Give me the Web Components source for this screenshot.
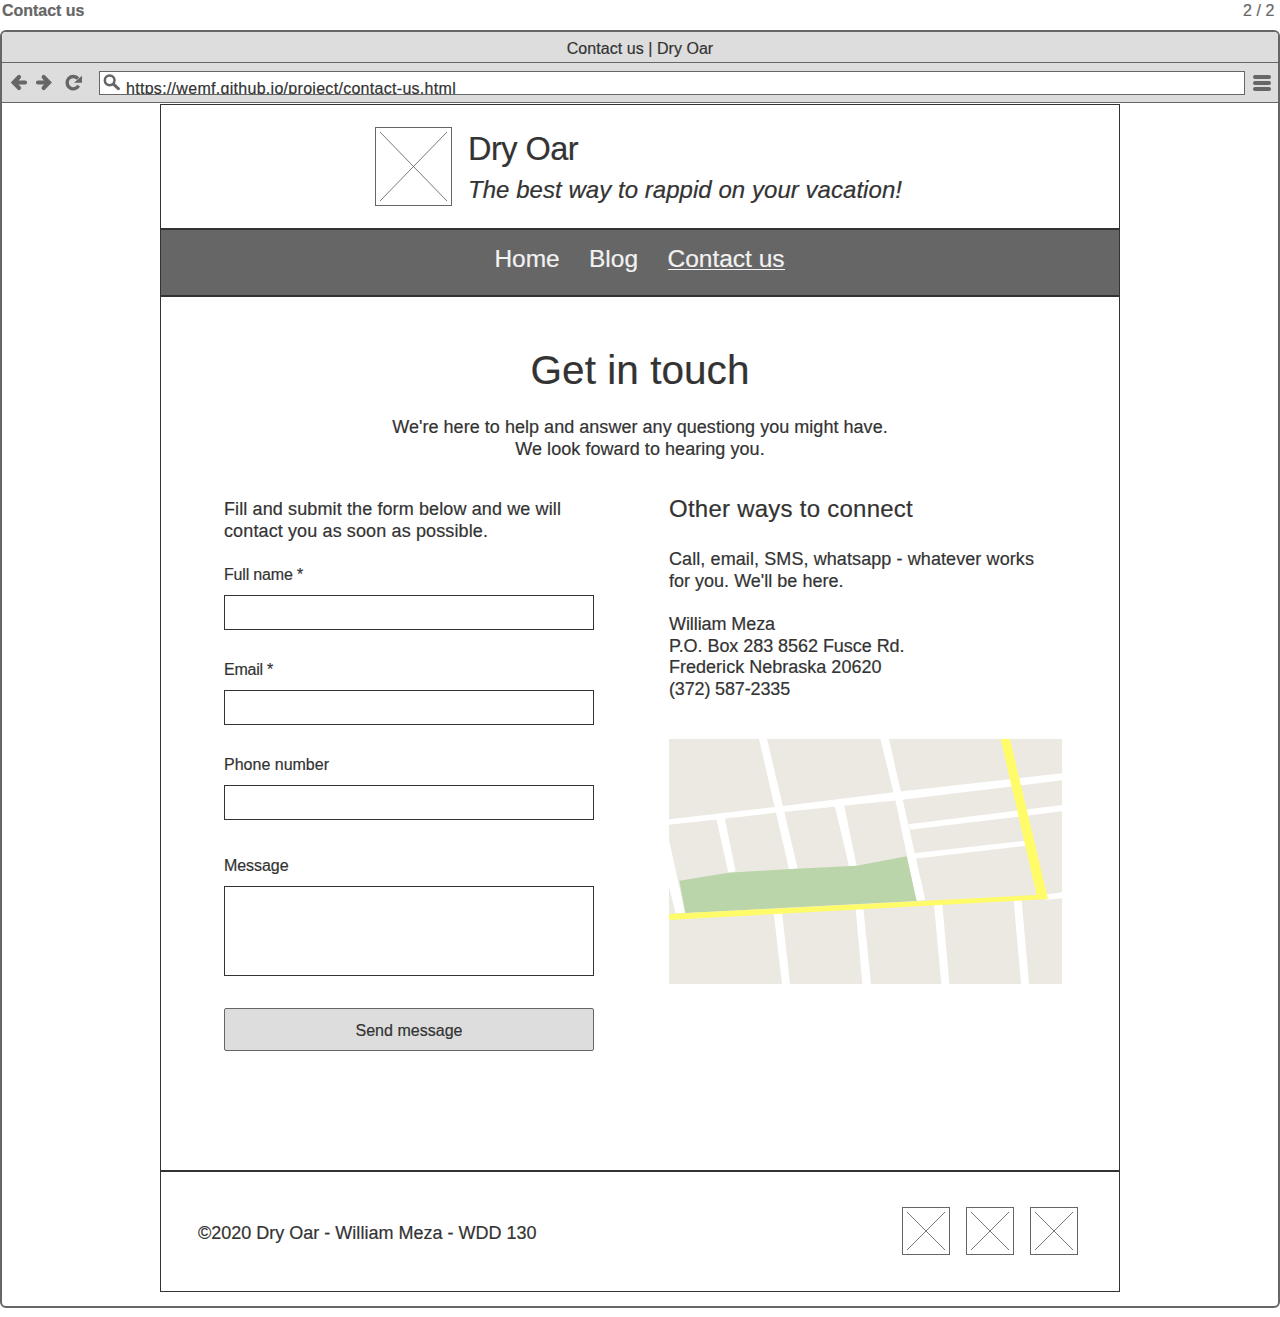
<!DOCTYPE html>
<html lang="en">
<head>
<meta charset="utf-8">
<title>Contact us | Dry Oar</title>
<style>
html,body{margin:0;background:#fff}
body{font-family:"Liberation Sans",Arial,sans-serif;color:#333}
</style>
</head>
<body>
<wire-app></wire-app>
<script>
const define = (name, html, setup) => customElements.define(name, class extends HTMLElement {
  connectedCallback() {
    if (this.shadowRoot) return;
    const t = document.createElement('template');
    t.innerHTML = html;
    this.attachShadow({mode: 'open'}).appendChild(t.content.cloneNode(true));
    if (setup) setup(this, this.shadowRoot);
  }
});

/* One line of text, tracked so that it spans the width given in "w". */
define('text-line', `
<style>:host{display:block;white-space:nowrap;-webkit-text-stroke:.2px currentColor}span{display:inline-block;vertical-align:top}</style>
<span><slot></slot></span>`, (el, root) => {
  const span = root.querySelector('span');
  const want = parseFloat(el.getAttribute('w'));
  if (!want) return;
  const n = el.textContent.length;
  const have = span.getBoundingClientRect().width;
  span.style.letterSpacing = ((want - have) / n).toFixed(4) + 'px';
});

define('image-box', `
<style>
:host{display:block;box-sizing:border-box;border:1px solid #666;padding:4px;background:#fff;flex:none}
svg{display:block;width:100%;height:100%}
</style>
<svg viewBox="0 0 100 100" preserveAspectRatio="none"><path d="M0 0L100 100M100 0L0 100" stroke="#555" stroke-width=".8" vector-effect="non-scaling-stroke" fill="none"/></svg>`);

define('form-field', `
<style>
:host{display:flex;flex-direction:column;gap:10px;padding-top:1px;font-size:16px;line-height:20px}
div{box-sizing:border-box;height:var(--box,35px);border:1px solid #333;background:#fff}
</style>
<slot></slot><div></div>`);

define('send-button', `
<style>
:host{display:flex;box-sizing:border-box;height:43px;padding-top:2px;align-items:center;justify-content:center;border:1px solid #666;border-radius:2px;background:#ddd;font-size:16px;line-height:20px}
</style>
<slot></slot>`);

define('street-map', `
<style>:host{display:block;width:393px;height:245px}svg{display:block}</style>
<svg width="393" height="245" viewBox="27 27 1179 735">
<rect x="27" y="27" width="1179" height="735" fill="#ece9e2"/>
<g fill="#fff">
<path d="M27 268L345 231L700 187L1206 130V151L720 210L370 246L27 284Z"/>
<path d="M297 27H321L413 416L387 418Z"/>
<path d="M661 27H687L796 510L769 512L706 210Z"/>
<path d="M168 262L193 259L227 424L205 428Z"/>
<path d="M523 222L551 219L590 407L567 409Z"/>
<path d="M745 283L1206 225V244L750 299Z"/>
<path d="M760 370L1096 332L1100 347L764 386Z"/>
<path d="M27 330L75 548L47 550L27 470Z"/>
<path d="M1155 494L1206 487V505L1155 509Z"/>
<path d="M341 548L366 546L390 762H366Z"/>
<path d="M587 536L610 535L633 762H607Z"/>
<path d="M822 524L847 522L868 762H844Z"/>
<path d="M1061 512L1085 511L1107 762H1083Z"/>
</g>
<path d="M58 452L205 428L405 416L590 407L740 379L770 513L76 549Z" fill="#bbd5ab"/>
<path d="M1022 27H1050L1164 507L27 570V552L1130 495Z" fill="#fffb69"/>
</svg>`);

define('browser-bar', `
<style>
:host{display:block;background:#ddd;font-size:16px;line-height:20px}
.title{display:flex;justify-content:center;padding-top:7px;box-sizing:border-box;border-bottom:1px solid #666;height:31px}
.tools{display:flex;align-items:flex-start;box-sizing:border-box;height:40px;padding:8px 7.5px 0 7px;border-bottom:1px solid #666}
.nav{flex:none;width:90px;height:24px}
.url{display:flex;flex:none;width:1146px;height:24px;box-sizing:border-box;border:1px solid #666;background:#fff;overflow:hidden}
.url svg{flex:none;margin-right:6px}
.url text-line{margin-top:7px}
.menu{display:flex;flex-direction:column;gap:2px;padding:4px 0 0 7.500px}
.menu i{width:18px;height:4px;border-radius:2px;background:#666}
</style>
<div class="title"><text-line w="146.5">Contact us | Dry Oar</text-line></div>
<div class="tools">
<svg class="nav" viewBox="27 213 270 72" fill="none" stroke="#666" stroke-linecap="round">
<path d="M57 231L41 247.500L57 264M44 247.500H75" stroke-width="12.500"/>
<path d="M131 231L147 247.500L131 264M144 247.500H114" stroke-width="12.500"/>
<path d="M234 236A18.500 18.500 0 1 0 236 257" stroke-width="10" stroke-linecap="butt"/>
<path d="M246 227V248H222Z" fill="#666" stroke="none"/>
</svg>
<div class="url">
<svg width="20" height="22" viewBox="300 216 60 66" fill="none" stroke="#666"><circle cx="329" cy="241" r="14.500" stroke-width="7.500"/><path d="M341 253L355 266" stroke-width="9" stroke-linecap="round"/></svg>
<text-line w="330">https://wemf.github.io/project/contact-us.html</text-line>
</div>
<div class="menu"><i></i><i></i><i></i></div>
</div>`);

define('site-header', `
<style>
:host{display:flex;box-sizing:border-box;height:124px;padding:22px 0 0 214px;gap:16px}
image-box{width:77px;height:79px}
.name{font-size:32.5px;line-height:38px;margin-top:3px}
.tag{font-size:24px;line-height:30px;font-style:italic;margin-top:7px}
</style>
<image-box></image-box>
<div><text-line class="name" w="110">Dry Oar</text-line>
<text-line class="tag" w="434">The best way to rappid on your vacation!</text-line></div>`);

define('site-nav', `
<style>
:host{display:flex;justify-content:center;gap:29.500px;box-sizing:border-box;height:69px;padding:14px 1px 0 0;border:solid #333;border-width:2px 0;background:#666;color:#f2f2f2;font-size:24.500px;line-height:30px}
.on{border-bottom:1px solid #f2f2f2;height:25px}
</style>
<text-line w="65">Home</text-line><text-line w="49">Blog</text-line><text-line class="on" w="117">Contact us</text-line>`);

define('contact-page', `
<style>
:host{display:block;box-sizing:border-box;height:873px;padding-top:49px;font-size:18px;line-height:21.6px}
.h1{font-size:40.500px;line-height:48px;display:flex;justify-content:center}
.lead{display:flex;flex-direction:column;align-items:center;margin-top:23px}
.cols{display:flex;gap:75px;padding-left:63px;margin-top:34px}
.form{display:flex;flex-direction:column;width:370px;padding-top:5px}
.intro{height:65px}
.form form-field{margin-bottom:29px}
.form .msg{--box:90px;margin:6px 0 32px}
.h2{font-size:24px;line-height:29px;margin-bottom:26px}
.gap{height:21.6px}
street-map{margin-top:38.4px}
</style>
<div class="h1"><text-line w="219">Get in touch</text-line></div>
<div class="lead"><text-line w="495.500">We're here to help and answer any questiong you might have.</text-line><text-line w="249.500">We look foward to hearing you.</text-line></div>
<div class="cols">
<div class="form">
<div class="intro"><text-line w="337">Fill and submit the form below and we will</text-line><text-line w="264">contact you as soon as possible.</text-line></div>
<form-field><text-line w="79">Full name *</text-line></form-field>
<form-field><text-line w="49">Email *</text-line></form-field>
<form-field><text-line w="105">Phone number</text-line></form-field>
<form-field class="msg"><text-line w="64.500">Message</text-line></form-field>
<send-button><text-line w="107">Send message</text-line></send-button>
</div>
<div class="info">
<text-line class="h2" w="244">Other ways to connect</text-line>
<text-line w="365">Call, email, SMS, whatsapp - whatever works</text-line>
<text-line w="174.500">for you. We'll be here.</text-line>
<div class="gap"></div>
<text-line w="106">William Meza</text-line>
<text-line w="235.500">P.O. Box 283 8562 Fusce Rd.</text-line>
<text-line w="212.500">Frederick Nebraska 20620</text-line>
<text-line w="121">(372) 587-2335</text-line>
<street-map></street-map>
</div>
</div>`);

define('site-footer', `
<style>
:host{display:flex;justify-content:space-between;align-items:flex-start;box-sizing:border-box;height:121px;border-top:2px solid #333;padding:35px 41px 0 37px;font-size:18px;line-height:22px}
text-line{margin-top:15px}
div{display:flex;gap:16px}
image-box{width:48px;height:48px}
</style>
<text-line w="338.500">©2020 Dry Oar - William Meza - WDD 130</text-line>
<div><image-box></image-box><image-box></image-box><image-box></image-box></div>`);

define('wire-app', `
<style>
:host{display:block;width:1280px;height:1317px;overflow:hidden}
.top{display:flex;justify-content:space-between;box-sizing:border-box;height:30px;padding:1px 5.500px 0 2px;font-size:16px;line-height:20px;color:#666}
.top b{display:block}
.win{box-sizing:border-box;height:1278px;border:2px solid #666;border-radius:6px;overflow:hidden;background:#fff}
.page{box-sizing:border-box;width:960px;height:1188px;margin:1px auto 0;border:1px solid #333}
.page site-header{height:123px}
</style>
<div class="top"><b><text-line w="82.500">Contact us</text-line></b><text-line w="31.500">2 / 2</text-line></div>
<div class="win">
<browser-bar></browser-bar>
<div class="page">
<site-header></site-header>
<site-nav></site-nav>
<contact-page></contact-page>
<site-footer></site-footer>
</div>
</div>`);
</script>
</body>
</html>
